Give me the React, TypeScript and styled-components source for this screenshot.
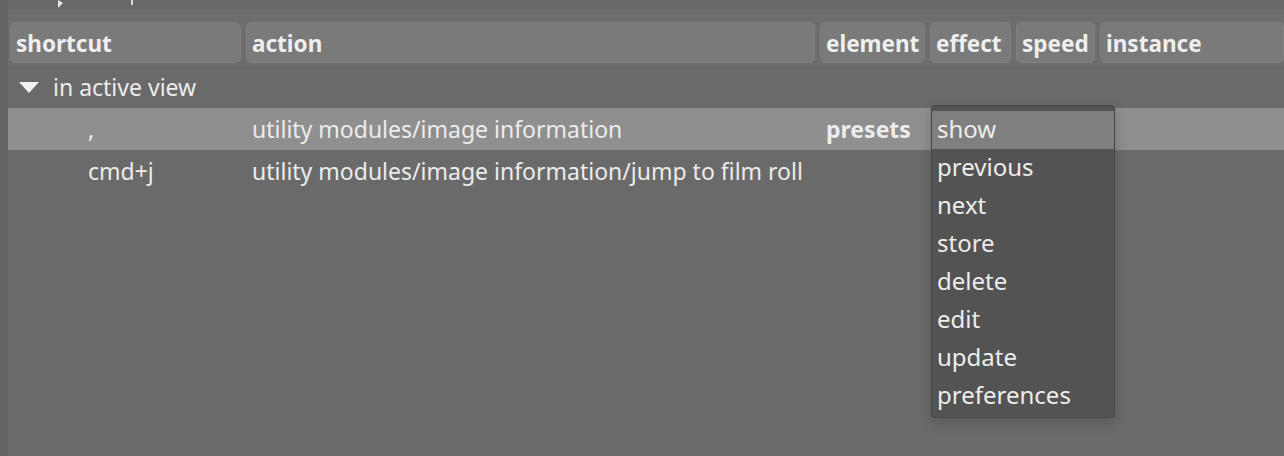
import React from "react";
import styled, { createGlobalStyle } from "styled-components";

const GlobalStyle = createGlobalStyle`
  html, body {
    margin: 0;
    padding: 0;
    background: #666666;
    width: 1284px;
    height: 456px;
    overflow: hidden;
  }
  body {
    font-family: "Noto Sans", "DejaVu Sans", sans-serif;
    font-size: 23px;
    color: #ececec;
  }
`;

const COLUMNS = "231px 569px 105px 81px 79px 1fr";

const headers = ["shortcut", "action", "element", "effect", "speed", "instance"];

const rows = [
  {
    shortcut: ",",
    action: "utility modules/image information",
    element: "presets",
    selected: true,
  },
  {
    shortcut: "cmd+j",
    action: "utility modules/image information/jump to film roll",
    element: "",
    selected: false,
  },
];

const menuItems = [
  "show",
  "previous",
  "next",
  "store",
  "delete",
  "edit",
  "update",
  "preferences",
];

const App = () => {
  return (
    <>
      <GlobalStyle />
      <Window>
        <Panel>
          <ClippedRow>
            {/* bottom of the row scrolled out of view above */}
            <svg width="140" height="10" viewBox="0 0 140 10">
              <path d="M58 0 L58 8 L63 3 Z" fill="#e6e6e6" />
              <rect x="131" y="0" width="2" height="5" fill="#dcdcdc" />
            </svg>
          </ClippedRow>
          <HeaderBar>
            {headers.map((h) => (
              <HeaderCell key={h}>{h}</HeaderCell>
            ))}
          </HeaderBar>
          <GroupRow>
            <Triangle />
            <span>in active view</span>
          </GroupRow>
          {rows.map((r) => (
            <Row key={r.action} selected={r.selected}>
              <ShortcutCell>{r.shortcut}</ShortcutCell>
              <Cell>{r.action}</Cell>
              <Cell bold>{r.element}</Cell>
              <Cell />
              <Cell />
              <Cell />
            </Row>
          ))}
          <Menu>
            {menuItems.map((m, i) => (
              <MenuItem key={m} active={i === 0}>
                {m}
              </MenuItem>
            ))}
          </Menu>
        </Panel>
      </Window>
    </>
  );
};

export default App;

const Window = styled.div`
  display: flex;
  width: 1284px;
  height: 456px;
  padding-left: 8px;
  box-sizing: border-box;
  background: #656565;
`;

const Panel = styled.div`
  position: relative;
  flex: 1;
  background: #6a6a6a;
  overflow: hidden;
`;

const ClippedRow = styled.div`
  height: 10px;
  overflow: hidden;
  background: #686868;
  margin-left: -8px;

  > svg {
    display: block;
  }
`;

const HeaderBar = styled.div`
  display: grid;
  grid-template-columns: ${COLUMNS};
  column-gap: 5px;
  padding: 12px 0 2px 2px;
  background: #6d6d6d;
`;

const HeaderCell = styled.div`
  height: 41px;
  box-sizing: border-box;
  display: flex;
  align-items: center;
  padding: 0 0 0 5px;
  padding-top: 2px;
  background: #7a7a7a;
  border: 1px solid #808080;
  border-radius: 5px;
  font-weight: 700;
  font-size: 22.5px;
  color: #efefef;
  white-space: nowrap;
  overflow: hidden;
`;

const GroupRow = styled.div`
  display: flex;
  align-items: center;
  height: 43px;
  padding-left: 11px;
  gap: 14px;
`;

const Triangle = styled.span`
  width: 0;
  height: 0;
  border-left: 10px solid transparent;
  border-right: 10px solid transparent;
  border-top: 11px solid #f2f2f2;
  margin-top: 1px;
`;

const Row = styled.div<{ selected?: boolean }>`
  display: grid;
  grid-template-columns: ${COLUMNS};
  column-gap: 5px;
  padding-left: 2px;
  height: 42px;
  align-items: center;
  background: ${(p) => (p.selected ? "#8f8f8f" : "transparent")};
`;

const Cell = styled.div<{ bold?: boolean }>`
  padding-left: 6px;
  white-space: nowrap;
  font-weight: ${(p) => (p.bold ? 700 : 400)};
`;

const ShortcutCell = styled(Cell)`
  padding-left: 78px;
`;

const Menu = styled.div`
  position: absolute;
  left: 923px;
  top: 105px;
  width: 184px;
  height: 313px;
  box-sizing: border-box;
  padding-top: 5px;
  background: #535353;
  border: 1px solid #464646;
  border-radius: 3px;
  box-shadow: 0 4px 14px rgba(0, 0, 0, 0.18), 0 0 0 1px rgba(120, 120, 120, 0.25);
`;

const MenuItem = styled.div<{ active?: boolean }>`
  height: 38px;
  box-sizing: border-box;
  display: flex;
  align-items: center;
  padding: 0 0 4px 5px;
  background: ${(p) => (p.active ? "#7f7f7f" : "transparent")};
  color: #ededed;
  font-size: 24px;
  white-space: nowrap;
`;
